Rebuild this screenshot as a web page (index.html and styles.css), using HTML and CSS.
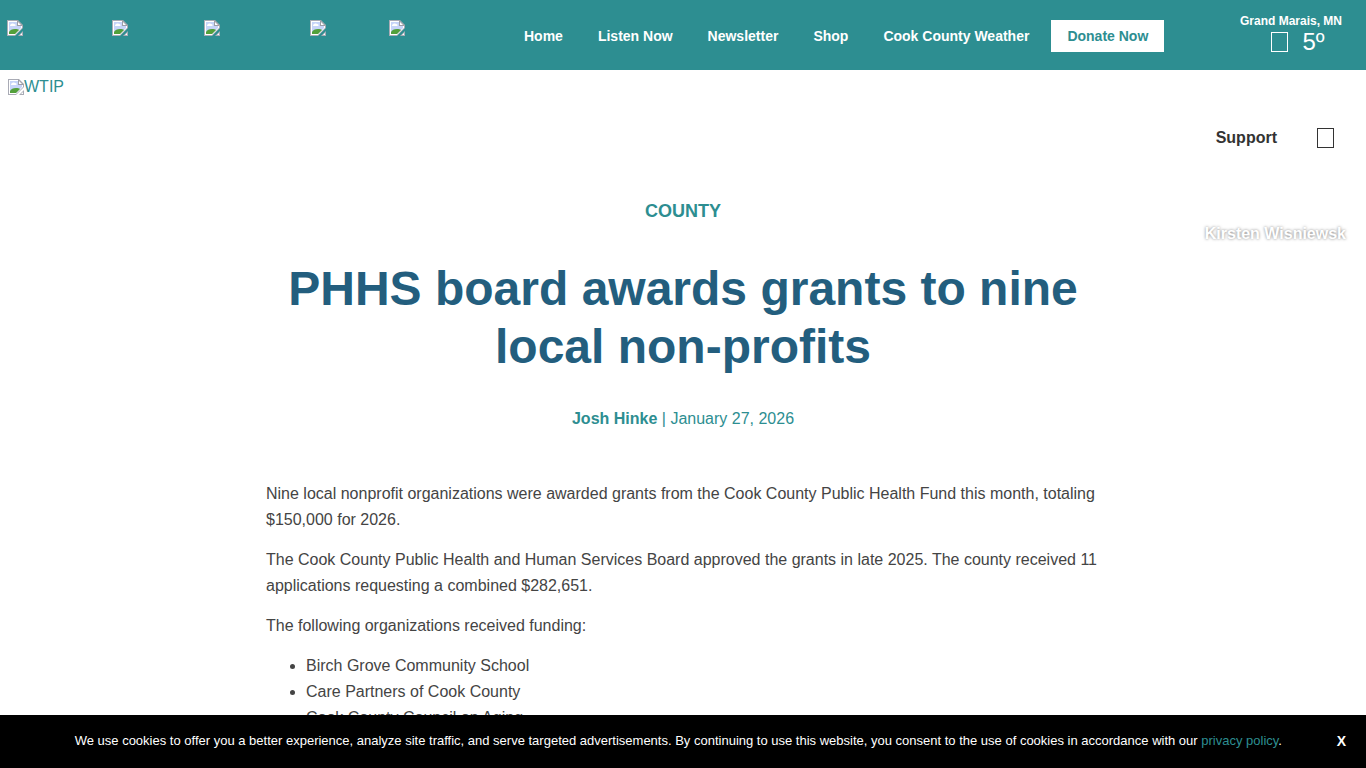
FILE: index.html
```html
<!DOCTYPE html>
<html lang="en">
<head>
    <meta charset="UTF-8">
    <meta name="viewport" content="width=device-width, initial-scale=1.0">
    <title>PHHS board awards grants to nine local non-profits | WTIP</title>
    <link rel="stylesheet" href="styles.css">
</head>
<body>
    <svg class="sprite" aria-hidden="true">
        <symbol id="picture" viewBox="0 0 16 16">
            <path d="M0 0h11l5 5v3l-8 8H0z" fill="#a9abb5"/>
            <path d="M1 1h9v5h5v2l-7 7H1z" fill="#fff"/>
            <path d="M2 2h8v4h4v2l-6 6H2z" fill="#c6d4f8"/>
            <path d="M3 6c0-2 2-3 4-2 2 0 2 2 1 2z" fill="#fff"/>
            <path d="M2 14v-2c1-2 3-3 6-3 2 0 3 0 4 1l-4 4z" fill="#53a03b"/>
            <path d="M10 0l6 6h-6z" fill="#9d9fa6"/>
            <path d="M11 2l3 3h-3z" fill="#fff"/>
            <path d="M16 11v5h-5z" fill="#a9abb5"/>
            <path d="M15 13v2h-2z" fill="#fff"/>
        </symbol>
    </svg>

    <header class="topbar">
        <div class="social">
            <a href="#" aria-label="Facebook"><svg class="picture"><use href="#picture"/></svg></a>
            <a href="#" aria-label="Instagram"><svg class="picture"><use href="#picture"/></svg></a>
            <a href="#" aria-label="YouTube"><svg class="picture"><use href="#picture"/></svg></a>
            <a href="#" aria-label="Podcasts"><svg class="picture"><use href="#picture"/></svg></a>
            <a href="#" aria-label="App"><svg class="picture"><use href="#picture"/></svg></a>
        </div>
        <nav class="top-nav">
            <a href="#">Home</a>
            <a href="#">Listen Now</a>
            <a href="#">Newsletter</a>
            <a href="#">Shop</a>
            <a href="#">Cook County Weather</a>
            <a href="#" class="donate">Donate Now</a>
        </nav>
        <div class="weather">
            <div class="place">Grand Marais, MN</div>
            <div class="temp"><span class="glyph"></span>5º</div>
        </div>
    </header>

    <div class="masthead">
        <a href="#" class="logo"><svg class="picture"><use href="#picture"/></svg>WTIP</a>
        <nav class="main-nav">
            <a href="#">Support</a>
            <button class="search" aria-label="Search"><span class="glyph"></span></button>
        </nav>
    </div>

    <main class="article">
        <a href="#" class="category">COUNTY</a>
        <div class="credit">Kirsten Wisniewsk</div>
        <h1>PHHS board awards grants to nine local non-profits</h1>
        <p class="byline"><a href="#">Josh Hinke</a> | January 27, 2026</p>
        <div class="content">
            <p>Nine local nonprofit organizations were awarded grants from the Cook County Public Health Fund this month, totaling $150,000 for 2026.</p>
            <p>The Cook County Public Health and Human Services Board approved the grants in late 2025. The county received 11 applications requesting a combined $282,651.</p>
            <p>The following organizations received funding:</p>
            <ul>
                <li>Birch Grove Community School</li>
                <li>Care Partners of Cook County</li>
                <li>Cook County Council on Aging</li>
            </ul>
        </div>
    </main>

    <div class="cookies">
        <p>We use cookies to offer you a better experience, analyze site traffic, and serve targeted advertisements. By continuing to use this website, you consent to the use of cookies in accordance with our <a href="#">privacy policy</a>.</p>
        <button class="close" aria-label="Close">X</button>
    </div>
</body>
</html>
```

FILE: styles.css
```css
* {
    box-sizing: border-box;
}

body {
    margin: 0;
    height: 100vh;
    overflow: hidden;
    font-family: "Liberation Sans", Arial, sans-serif;
    font-size: 16px;
    line-height: 26px;
    color: #444;
    background-color: #fff;
}

a {
    color: #2d8e91;
    text-decoration: none;
}

button {
    padding: 0;
    border: none;
    background: none;
    font-family: inherit;
    cursor: pointer;
}

.sprite {
    display: none;
}

.picture {
    display: block;
    width: 16px;
    height: 16px;
}

/* Top bar */
.topbar {
    display: flex;
    align-items: flex-start;
    height: 70px;
    padding: 0 24px 0 7px;
    background-color: #2d8e91;
    color: #fff;
}

.social {
    display: grid;
    grid-template-columns: 105px 92px 106px 79px 16px;
    padding-top: 20px;
}

.top-nav {
    display: flex;
    gap: 35px;
    margin-left: 119px;
    padding-top: 20px;
    font-size: 14px;
    font-weight: bold;
    line-height: 32px;
    white-space: nowrap;
}

.top-nav a {
    color: #fff;
}

.top-nav .donate {
    margin-left: -13px;
    padding: 0 16px;
    background-color: #fff;
    color: #2d8e91;
}

.weather {
    margin-left: auto;
    padding-top: 14px;
    text-align: center;
}

.place {
    font-size: 12px;
    font-weight: bold;
    line-height: 14px;
}

.temp {
    display: flex;
    align-items: center;
    justify-content: center;
    gap: 14px;
    padding-left: 14px;
    font-size: 24px;
    line-height: 28px;
}

.glyph {
    display: block;
    width: 17px;
    height: 20px;
    border: 1px solid currentColor;
}

/* Logo row */
.masthead {
    display: flex;
    align-items: flex-start;
    justify-content: space-between;
    height: 128px;
    padding: 4px 32px 0 8px;
}

.logo {
    display: flex;
    align-items: center;
}

.main-nav {
    display: flex;
    align-items: center;
    gap: 40px;
    padding-top: 51px;
    font-weight: bold;
}

.main-nav a,
.search {
    color: #333;
}

/* Article */
.article {
    position: relative;
    text-align: center;
}

.category {
    display: block;
    font-size: 18px;
    font-weight: bold;
}

.credit {
    position: absolute;
    top: 23px;
    right: 20px;
    color: #fff;
    font-weight: bold;
    text-shadow: 0 0 3px rgba(0, 0, 0, 0.5);
}

h1 {
    max-width: 834px;
    margin: 36px auto 30px;
    color: #235e7e;
    font-size: 48px;
    line-height: 58px;
}

.byline {
    margin: 0 0 49px;
    color: #2d8e91;
}

.byline a {
    font-weight: bold;
}

.content {
    max-width: 834px;
    margin: 0 auto;
    text-align: left;
}

.content p,
.content ul {
    margin: 0 0 14px;
}

.content ul {
    padding-left: 40px;
}

/* Cookie notice */
.cookies {
    position: fixed;
    bottom: 0;
    left: 0;
    display: flex;
    align-items: center;
    width: 100%;
    height: 53px;
    padding: 0 20px 2px;
    background-color: #000;
    color: #fff;
    font-size: 13px;
}

.cookies p {
    flex: 1;
    margin: 0;
    text-align: center;
}

.close {
    color: #fff;
    font-size: 14px;
    font-weight: bold;
}
```
